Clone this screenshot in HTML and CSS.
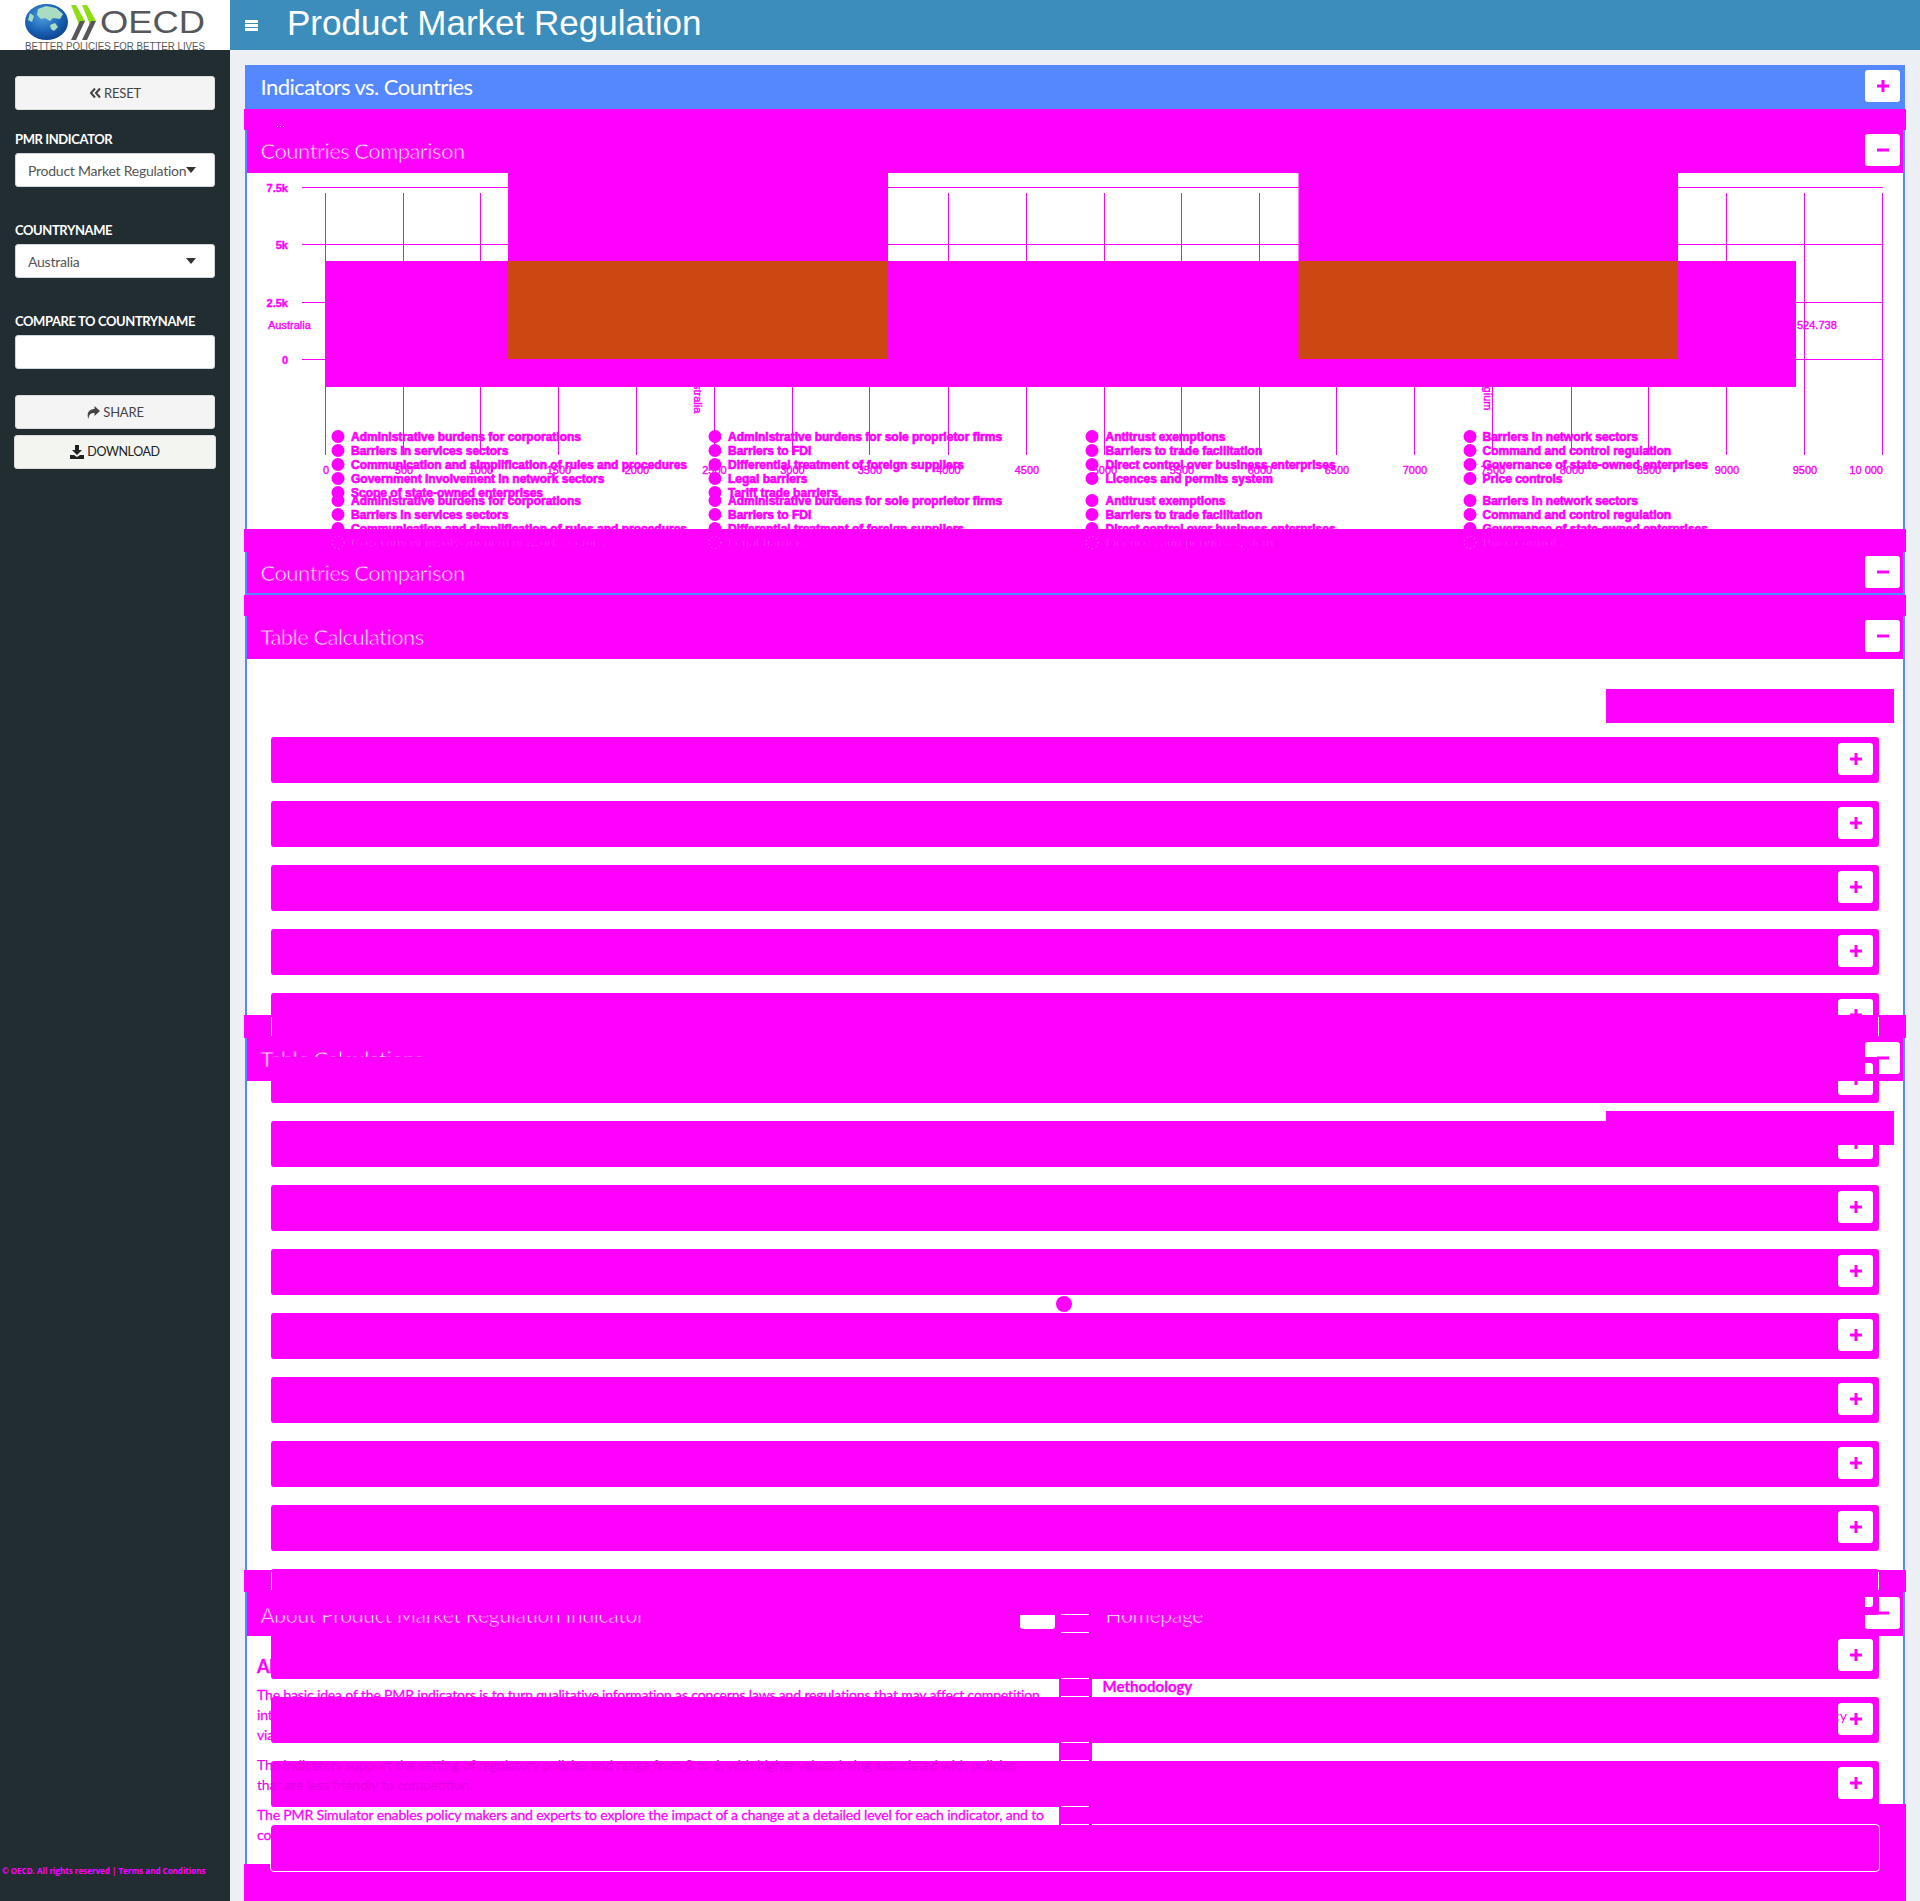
FILE: index.html
```html
<!DOCTYPE html>
<html lang="en">
<head>
<meta charset="utf-8">
<title>Product Market Regulation</title>
<link rel="stylesheet" href="styles.css">
</head>
<body>
<div class="app">
  <a class="logo" href="#" aria-label="OECD">
    <svg class="logo-art" width="230" height="50" viewBox="0 0 230 50">
      <defs>
        <radialGradient id="globe" cx="42%" cy="35%" r="70%">
          <stop offset="0" stop-color="#4f9fe0"/>
          <stop offset=".6" stop-color="#1a62b4"/>
          <stop offset="1" stop-color="#0c3f86"/>
        </radialGradient>
      </defs>
      <ellipse cx="46.500" cy="22" rx="21.500" ry="18" fill="url(#globe)"/>
      <path class="land" d="M38 9l8-3 10 2 7 6-3 5-7-1-3 3-5-3-4 1-4-4zM50 25l5-2 3 4-4 4-3-2zM30 13l4 3-2 6-4-2z"/>
      <polygon class="chev-g" points="71,5 76,5 85,21 80,27"/>
      <polygon class="chev-d" points="80,21 85,21 76,40 71,40"/>
      <polygon class="chev-g" points="82,5 87,5 96,21 91,27"/>
      <polygon class="chev-d" points="91,21 96,21 87,40 82,40"/>
      <text class="logo-word" x="100" y="33" textLength="105" lengthAdjust="spacingAndGlyphs">OECD</text>
      <text class="logo-sub" x="25" y="50" textLength="180" lengthAdjust="spacingAndGlyphs">BETTER POLICIES FOR BETTER LIVES</text>
    </svg>
  </a>
  <header class="topbar">
    <span class="burger"><i></i><i></i><i></i></span>
    <h1 class="app-title">Product Market Regulation</h1>
  </header>

  <aside class="sidebar">
    <button class="btn" type="button">
      <svg class="ic" width="12" height="12" viewBox="0 0 12 12"><path d="M6 1.500 2 6l4 4.500M11 1.500 7 6l4 4.500" fill="none" stroke="#444" stroke-width="2"/></svg>
      RESET
    </button>
    <div class="field field-first">
      <label class="field-label">PMR INDICATOR</label>
      <div class="select"><span>Product Market Regulation</span><b class="caret"></b></div>
    </div>
    <div class="field">
      <label class="field-label">COUNTRYNAME</label>
      <div class="select"><span>Australia</span><b class="caret"></b></div>
    </div>
    <div class="field">
      <label class="field-label">COMPARE TO COUNTRYNAME</label>
      <div class="select"></div>
    </div>
    <button class="btn btn-share" type="button">
      <svg class="ic" width="14" height="13" viewBox="0 0 14 13"><path d="M8.500 0 14 5 8.500 10V7C5 7 2.800 8 2.500 13 .5 8 2 3.200 8.500 3z" fill="#444"/></svg>
      SHARE
    </button>
    <button class="btn btn-download" type="button">
      <svg class="ic" width="14" height="14" viewBox="0 0 14 14"><path d="M5 0h4v5h3L7 10 2 5h3zM0 10h4l3 2 3-2h4v4H0z" fill="#222"/></svg>
      DOWNLOAD
    </button>
    <p class="copyright">© OECD. All rights reserved | Terms and Conditions</p>
  </aside>

  <main class="content">
    <div class="stack">
      <div class="head head-blue">
        <h2 class="title">Indicators vs. Countries</h2>
        <span class="tool"><svg width="12" height="12" viewBox="0 0 12 12"><path d="M4.500 0h3v4.500H12v3H7.500V12h-3V7.500H0v-3h4.500z"/></svg></span>
      </div>

      <div class="band band-s"><i class="speck"></i></div>
      <div class="head">
        <h2 class="title title-eroded">Countries Comparison</h2>
        <span class="tool"><svg width="12" height="12" viewBox="0 0 12 12"><path d="M0 4.500h12v3H0z"/></svg></span>
      </div>

      <div class="chart">
        <svg class="chart-art" width="1656" height="356" viewBox="247 173 1656 356">
          <g class="grid">
            <path d="M302 187.500H1883M302 244.500H1883M302 302.500H1883M302 359.500H1883"/>
            <path d="M325.500 193V455M403.500 193V455M480.500 193V455M558.500 193V455M636.500 193V455M714.500 193V455M792.500 193V455M869.500 193V455M948.500 193V455M1026.500 193V455M1104.500 193V455M1181.500 193V455M1259.500 193V455M1336.500 193V455M1414.500 193V455M1492.500 193V455M1571.500 193V455M1648.500 193V455M1726.500 193V455M1804.500 193V455M1882.500 193V455"/>
          </g>
          <g class="tick-y">
            <text x="288" y="192">7.5k</text>
            <text x="288" y="249">5k</text>
            <text x="288" y="307">2.5k</text>
            <text x="288" y="364">0</text>
          </g>
          <g class="tick-x">
            <text x="326" y="474">0</text><text x="404" y="474">500</text><text x="481" y="474">1000</text><text x="559" y="474">1500</text><text x="637" y="474">2000</text><text x="714.500" y="474">2500</text><text x="792.500" y="474">3000</text><text x="870" y="474">3500</text><text x="948.500" y="474">4000</text><text x="1027" y="474">4500</text><text x="1105" y="474">5000</text><text x="1182" y="474">5500</text><text x="1260" y="474">6000</text><text x="1337" y="474">6500</text><text x="1415" y="474">7000</text><text x="1493" y="474">7500</text><text x="1572" y="474">8000</text><text x="1649" y="474">8500</text><text x="1727" y="474">9000</text><text x="1805" y="474">9500</text><text class="tick-last" x="1883" y="474">10 000</text>
          </g>
          <text class="cat" x="268" y="329">Australia</text>
          <text class="cat" x="1797" y="329">524.738</text>
          <text class="cat" transform="translate(694 370.500) rotate(90)">Australia</text>
          <text class="cat" transform="translate(1484 370.700) rotate(90)">Belgium</text>
          <rect class="fill" x="325" y="261" width="1471" height="126"/>
          <rect class="fill" x="508" y="173" width="380" height="88"/>
          <rect class="fill" x="1298.500" y="173" width="379.500" height="88"/>
          <rect class="bar" x="508" y="261" width="380" height="98"/>
          <rect class="bar" x="1298.500" y="261" width="379.500" height="98"/>
          <g class="legend">
            <circle cx="338" cy="436.500" r="6.500"/><circle cx="338" cy="450.500" r="6.500"/><circle cx="338" cy="464.500" r="6.500"/><circle cx="338" cy="478.500" r="6.500"/><circle cx="338" cy="492.500" r="6.500"/>
            <circle cx="338" cy="500.500" r="6.500"/><circle cx="338" cy="514.500" r="6.500"/><circle cx="338" cy="528.500" r="6.500"/>
            <circle cx="715" cy="436.500" r="6.500"/><circle cx="715" cy="450.500" r="6.500"/><circle cx="715" cy="464.500" r="6.500"/><circle cx="715" cy="478.500" r="6.500"/><circle cx="715" cy="492.500" r="6.500"/>
            <circle cx="715" cy="500.500" r="6.500"/><circle cx="715" cy="514.500" r="6.500"/><circle cx="715" cy="528.500" r="6.500"/>
            <circle cx="1092" cy="436.500" r="6.500"/><circle cx="1092" cy="450.500" r="6.500"/><circle cx="1092" cy="464.500" r="6.500"/><circle cx="1092" cy="478.500" r="6.500"/>
            <circle cx="1092" cy="500.500" r="6.500"/><circle cx="1092" cy="514.500" r="6.500"/><circle cx="1092" cy="528.500" r="6.500"/>
            <circle cx="1470" cy="436.500" r="6.500"/><circle cx="1470" cy="450.500" r="6.500"/><circle cx="1470" cy="464.500" r="6.500"/><circle cx="1470" cy="478.500" r="6.500"/>
            <circle cx="1470" cy="500.500" r="6.500"/><circle cx="1470" cy="514.500" r="6.500"/><circle cx="1470" cy="528.500" r="6.500"/>
            <text x="351" y="441">Administrative burdens for corporations</text>
            <text x="351" y="455">Barriers in services sectors</text>
            <text x="351" y="469">Communication and simplification of rules and procedures</text>
            <text x="351" y="483">Government involvement in network sectors</text>
            <text x="351" y="497">Scope of state-owned enterprises</text>
            <text x="351" y="505">Administrative burdens for corporations</text>
            <text x="351" y="519">Barriers in services sectors</text>
            <text x="351" y="533">Communication and simplification of rules and procedures</text>
            <text x="728" y="441">Administrative burdens for sole proprietor firms</text>
            <text x="728" y="455">Barriers to FDI</text>
            <text x="728" y="469">Differential treatment of foreign suppliers</text>
            <text x="728" y="483">Legal barriers</text>
            <text x="728" y="497">Tariff trade barriers</text>
            <text x="728" y="505">Administrative burdens for sole proprietor firms</text>
            <text x="728" y="519">Barriers to FDI</text>
            <text x="728" y="533">Differential treatment of foreign suppliers</text>
            <text x="1105.500" y="441">Antitrust exemptions</text>
            <text x="1105.500" y="455">Barriers to trade facilitation</text>
            <text x="1105.500" y="469">Direct control over business enterprises</text>
            <text x="1105.500" y="483">Licences and permits system</text>
            <text x="1105.500" y="505">Antitrust exemptions</text>
            <text x="1105.500" y="519">Barriers to trade facilitation</text>
            <text x="1105.500" y="533">Direct control over business enterprises</text>
            <text x="1482.500" y="441">Barriers in network sectors</text>
            <text x="1482.500" y="455">Command and control regulation</text>
            <text x="1482.500" y="469">Governance of state-owned enterprises</text>
            <text x="1482.500" y="483">Price controls</text>
            <text x="1482.500" y="505">Barriers in network sectors</text>
            <text x="1482.500" y="519">Command and control regulation</text>
            <text x="1482.500" y="533">Governance of state-owned enterprises</text>
          </g>
        </svg>
      </div>

      <div class="band band-l">
        <svg class="ghost" width="1662" height="23" viewBox="244 529 1662 23">
          <circle cx="338" cy="542.500" r="6"/><circle cx="715" cy="542.500" r="6"/><circle cx="1092" cy="542.500" r="6"/><circle cx="1470" cy="542.500" r="6"/>
          <text x="351" y="547">Government involvement in network sectors</text>
          <text x="728" y="547">Legal barriers</text>
          <text x="1105.500" y="547">Licences and permits system</text>
          <text x="1482.500" y="547">Price controls</text>
        </svg>
      </div>
      <div class="head head-short">
        <h2 class="title title-eroded">Countries Comparison</h2>
        <span class="tool"><svg width="12" height="12" viewBox="0 0 12 12"><path d="M0 4.500h12v3H0z"/></svg></span>
      </div>
      <div class="rule"></div>

      <div class="band band-s"></div>
      <div class="head">
        <h2 class="title title-eroded">Table Calculations</h2>
        <span class="tool"><svg width="12" height="12" viewBox="0 0 12 12"><path d="M0 4.500h12v3H0z"/></svg></span>
      </div>

      <section class="table-body table-one">
        <div class="search-mask"></div>
        <div class="rows">
          <div class="row"><span class="tool tool-row"><svg width="12" height="12" viewBox="0 0 12 12"><path d="M4.500 0h3v4.500H12v3H7.500V12h-3V7.500H0v-3h4.500z"/></svg></span></div>
          <div class="row"><span class="tool tool-row"><svg width="12" height="12" viewBox="0 0 12 12"><path d="M4.500 0h3v4.500H12v3H7.500V12h-3V7.500H0v-3h4.500z"/></svg></span></div>
          <div class="row"><span class="tool tool-row"><svg width="12" height="12" viewBox="0 0 12 12"><path d="M4.500 0h3v4.500H12v3H7.500V12h-3V7.500H0v-3h4.500z"/></svg></span></div>
          <div class="row"><span class="tool tool-row"><svg width="12" height="12" viewBox="0 0 12 12"><path d="M4.500 0h3v4.500H12v3H7.500V12h-3V7.500H0v-3h4.500z"/></svg></span></div>
          <div class="row"><span class="tool tool-row"><svg width="12" height="12" viewBox="0 0 12 12"><path d="M4.500 0h3v4.500H12v3H7.500V12h-3V7.500H0v-3h4.500z"/></svg></span></div>
          <div class="row"><span class="tool tool-row tool-cut-a"><svg width="12" height="12" viewBox="0 0 12 12"><path d="M4.500 0h3v4.500H12v3H7.500V12h-3V7.500H0v-3h4.500z"/></svg></span></div>
          <div class="row"><span class="tool tool-row"><svg width="12" height="12" viewBox="0 0 12 12"><path d="M4.500 0h3v4.500H12v3H7.500V12h-3V7.500H0v-3h4.500z"/></svg></span></div>
          <div class="row"><span class="tool tool-row"><svg width="12" height="12" viewBox="0 0 12 12"><path d="M4.500 0h3v4.500H12v3H7.500V12h-3V7.500H0v-3h4.500z"/></svg></span></div>
          <div class="row"><span class="tool tool-row"><svg width="12" height="12" viewBox="0 0 12 12"><path d="M4.500 0h3v4.500H12v3H7.500V12h-3V7.500H0v-3h4.500z"/></svg></span></div>
          <div class="row"><span class="tool tool-row"><svg width="12" height="12" viewBox="0 0 12 12"><path d="M4.500 0h3v4.500H12v3H7.500V12h-3V7.500H0v-3h4.500z"/></svg></span></div>
          <div class="row"><span class="tool tool-row"><svg width="12" height="12" viewBox="0 0 12 12"><path d="M4.500 0h3v4.500H12v3H7.500V12h-3V7.500H0v-3h4.500z"/></svg></span></div>
          <div class="row"><span class="tool tool-row"><svg width="12" height="12" viewBox="0 0 12 12"><path d="M4.500 0h3v4.500H12v3H7.500V12h-3V7.500H0v-3h4.500z"/></svg></span></div>
          <div class="row"><span class="tool tool-row"><svg width="12" height="12" viewBox="0 0 12 12"><path d="M4.500 0h3v4.500H12v3H7.500V12h-3V7.500H0v-3h4.500z"/></svg></span></div>
          <div class="row"><span class="tool tool-row tool-cut-b"><svg width="12" height="12" viewBox="0 0 12 12"><path d="M4.500 0h3v4.500H12v3H7.500V12h-3V7.500H0v-3h4.500z"/></svg></span></div>
          <div class="row"><span class="tool tool-row"><svg width="12" height="12" viewBox="0 0 12 12"><path d="M4.500 0h3v4.500H12v3H7.500V12h-3V7.500H0v-3h4.500z"/></svg></span></div>
          <div class="row"><span class="tool tool-row"><svg width="12" height="12" viewBox="0 0 12 12"><path d="M4.500 0h3v4.500H12v3H7.500V12h-3V7.500H0v-3h4.500z"/></svg></span></div>
          <div class="row"><span class="tool tool-row"><svg width="12" height="12" viewBox="0 0 12 12"><path d="M4.500 0h3v4.500H12v3H7.500V12h-3V7.500H0v-3h4.500z"/></svg></span></div>
          <div class="row row-outlined"></div>
        </div>
      </section>

      <div class="band band-l band-marks"></div>
      <div class="head">
        <h2 class="title title-eroded">Table Calculations</h2>
        <span class="tool"><svg width="12" height="12" viewBox="0 0 12 12"><path d="M0 4.500h12v3H0z"/></svg></span>
      </div>

      <section class="table-body table-two">
        <div class="search-mask"></div>
        <i class="busy-dot"></i>
      </section>

      <div class="band band-m band-marks"></div>
      <div class="about">
        <div class="about-col about-left">
          <div class="head head-tall">
            <h2 class="title title-eroded title-thin">About Product Market Regulation Indicator</h2>
            <span class="tool"><svg width="12" height="12" viewBox="0 0 12 12"><path d="M0 4.500h12v3H0z"/></svg></span>
          </div>
          <div class="about-text">
            <h3 class="about-heading">About the PMR Indicators</h3>
            <p>The basic idea of the PMR indicators is to turn qualitative information as concerns laws and regulations that may affect competition<br>into quantitative indicators that allow regulatory settings to be compared across countries and tracked over time,<br>via a detailed questionnaire.</p>
            <p class="ghosted">The indicators support the setting of regulatory policies and range from 0 to 6, with higher values being associated with policies<br>that are less friendly to competition.</p>
            <p>The PMR Simulator enables policy makers and experts to explore the impact of a change at a detailed level for each indicator, and to<br>compare the effects with the average score of other countries.</p>
          </div>
        </div>
        <div class="gutter">
          <i class="gutter-gap"></i><i class="gutter-gap"></i><i class="gutter-gap"></i><i class="gutter-gap"></i>
        </div>
        <div class="about-col about-right">
          <div class="head head-tall">
            <h2 class="title title-eroded title-thin">Homepage</h2>
            <span class="tool"><svg width="12" height="12" viewBox="0 0 12 12"><path d="M0 4.500h12v3H0z"/></svg></span>
          </div>
          <div class="links">
            <a class="link" href="#">Methodology</a>
            <p class="link-note">Read the note on the methodology and on the scoring of regulatory policy</p>
          </div>
          <div class="about-fill"></div>
        </div>
      </div>
      <div class="band-foot"></div>
    </div>
  </main>
</div>
</body>
</html>
```
FILE: styles.css
```css
* { box-sizing: border-box; }
html, body { margin: 0; height: 1901px; overflow: hidden; }
body { font-family: Lato, "Open Sans", sans-serif; font-size: 14px; color: #333; background: #ecf0f5; }

.app { display: grid; grid-template-columns: 230px 1fr; grid-template-rows: 50px 1fr; height: 1901px; }

/* top */
.logo { display: block; background: #fff; height: 50px; overflow: hidden; }
.logo-art { display: block; }
.land { fill: #a9dcc0; }
.chev-g { fill: #8edc12; }
.chev-d { fill: #56585a; }
.logo-word { font-family: "Liberation Sans", Arial, sans-serif; font-size: 32px; fill: #55575a; }
.logo-sub { font-family: "Liberation Sans", Arial, sans-serif; font-size: 10px; fill: #55575a; }
.topbar { background: #3c8dbc; display: flex; align-items: center; color: #fff; }
.burger { display: flex; flex-direction: column; gap: 1px; margin-left: 15px; width: 13px; }
.burger i { display: block; height: 3px; background: #fff; }
.app-title { margin: -5px 0 0 29px; font: 400 35px/50px "Liberation Sans", Arial, sans-serif; }

/* sidebar */
.sidebar { background: #222d32; padding: 26px 15px 0; display: flex; flex-direction: column; }
.btn { height: 34px; border: 1px solid #ddd; border-radius: 3px; background: #f4f4f4; color: #444; font: 400 13px/1 Lato, sans-serif; letter-spacing: -.2px; display: flex; align-items: center; justify-content: center; gap: 3px; padding: 0; }
.ic { display: block; }
.field { margin-top: 33px; }
.field-first { margin-top: 19px; }
.field-label { display: block; height: 20px; margin-bottom: 4px; font: 700 13px/20px Lato, sans-serif; letter-spacing: -.4px; color: #fff; white-space: nowrap; }
.select { height: 34px; background: #fff; border: 1px solid #d2d6de; border-radius: 3px; padding: 0 18px 0 12px; display: flex; align-items: center; justify-content: space-between; color: #555; font-size: 14px; letter-spacing: -.25px; white-space: nowrap; }
.caret { flex: none; width: 0; height: 0; border-left: 5px solid transparent; border-right: 5px solid transparent; border-top: 6px solid #333; }
.btn-share { margin-top: 26px; }
.btn-download { margin: 6px -1px 0; background: #f3f5f1; color: #222; font-size: 12.500px; letter-spacing: -.4px; }
.copyright { margin: auto -13px 23px; font: 700 8px/14px "Open Sans", sans-serif; color: #f0f; white-space: nowrap; }

/* main */
.content { padding: 15px 15px 0; min-width: 0; }
.stack { border-left: 2px solid #58f; border-right: 2px solid #58f; }

.head { display: flex; justify-content: space-between; align-items: flex-start; height: 43px; padding: 4px 3px 0 13.500px; background: #f0f; }
.head-blue { height: 44px; margin: 0 -2px; padding: 5px 5px 0 15.500px; background: #58f; border-radius: 3px 3px 0 0; }
.head-short { height: 41px; }
.head-tall { height: 44px; padding-top: 5px; }
.title { margin: 0; font: 400 22px/33px Lato, sans-serif; letter-spacing: -.55px; color: #fff; }
.title-eroded { -webkit-text-stroke: .75px #f0f; }
.title-thin { line-height: 36px; font-size: 21px; letter-spacing: -.3px; }

.tool { display: flex; align-items: center; justify-content: center; flex: none; width: 35px; height: 32px; background: #fff; border-radius: 3px; }
.tool svg { display: block; fill: #f0f; }
.tool-row { margin: 6px 6px 0 auto; }
.tool-cut-a { clip-path: path("M27 0H35V11H27Z M0 18H35V32H0Z"); }
.tool-cut-b { clip-path: inset(22px 0 0 27px); }

.band { position: relative; z-index: 3; margin: 0 -3px; background: #f0f; }
.band-s { height: 21px; }
.band-l { height: 23px; }
.band-m { height: 22px; }
.speck { position: absolute; left: 33px; top: 17px; width: 8px; height: 1px; background: repeating-linear-gradient(90deg, #fff 0 1px, transparent 1px 3px); }
.band-marks::before, .band-marks::after { content: ""; position: absolute; top: 2px; bottom: 2px; width: 1px; background: #fff; }
.band-marks::before { left: 27px; }
.band-marks::after { right: 27px; }
.rule { height: 2px; background: #58f; }

/* chart */
.chart { height: 356px; background: #fff; }
.chart-art { display: block; font-family: "Liberation Sans", Arial, sans-serif; }
.grid path { fill: none; stroke: #f0f; stroke-width: 1; shape-rendering: crispEdges; }
.tick-y text { font-size: 11px; fill: #f0f; stroke: #f0f; stroke-width: .4px; text-anchor: end; font-weight: 700; }
.tick-x text { font-size: 11px; fill: #f0f; stroke: #f0f; stroke-width: .4px; text-anchor: middle; }
.tick-x .tick-last { text-anchor: end; }
.cat { font-size: 11px; fill: #f0f; stroke: #f0f; stroke-width: .4px; }
.fill { fill: #f0f; }
.bar { fill: #cc4712; }
.legend circle { fill: #f0f; }
.legend text { font-size: 12px; font-weight: 700; fill: #f0f; stroke: #f0f; stroke-width: .7px; }
.ghost { display: block; font-family: "Liberation Sans", Arial, sans-serif; }
.ghost text { font-size: 12px; font-weight: 700; fill: #fff; stroke: #f0f; stroke-width: 1.450px; }
.ghost circle { fill: #f0f; stroke: #fff; stroke-width: .5px; stroke-dasharray: 1 3; }

/* tables */
.table-body { position: relative; background: #fff; }
.table-one { height: 356px; }
.table-two { height: 489px; }
.search-mask { position: relative; z-index: 3; width: 288px; height: 34px; margin: 0 9px 0 auto; background: #f0f; top: 30px; }
.rows { position: relative; z-index: 2; margin: 44px 24px 0; height: 0; }
.row { display: flex; height: 46px; margin-bottom: 18px; background: #f0f; border-radius: 3px; }
.row-outlined { outline: 1px solid #fff; outline-offset: 0; }
.busy-dot { position: absolute; z-index: 3; left: 809px; top: 215px; width: 16px; height: 16px; border-radius: 50%; background: #f0f; }

/* about */
.about { display: flex; height: 272px; }
.about-col { display: flex; flex-direction: column; }
.about-left { width: 812px; background: #fff; }
.about-left .tool { margin-right: 1px; }
.about-text { position: relative; z-index: 3; padding: 18px 0 0 10px; color: #f0f; font-weight: 400; font-size: 14px; line-height: 20px; letter-spacing: -.15px; white-space: nowrap; -webkit-text-stroke: .3px #f0f; }
.about-heading { margin: 0 0 7px; font: 700 18px/24px Lato, sans-serif; }
.about-text p { margin: 0 0 10px; }
.about-text .ghosted { -webkit-text-stroke: .25px rgba(90, 0, 90, .5); }
.gutter { position: relative; z-index: 3; flex: none; width: 33px; padding: 22px 0 0 2px; background: #f0f; }
.gutter-gap { display: block; width: 28px; height: 19px; margin-bottom: 45px; border-top: 1px solid #fff; border-bottom: 1px solid #fff; }
.about-right { flex: 1; margin-right: -3px; }
.about-right .head { margin-right: 3px; }
.links { height: 168px; margin-right: 3px; padding: 40px 0 0 10.500px; background: #fff; }
.link { display: block; color: #f0f; font: 700 15px/20px Lato, sans-serif; text-decoration: none; -webkit-text-stroke: .3px #f0f; }
.link-note { position: relative; z-index: 3; margin: 10px 0 0; padding-right: 56px; text-align: right; color: #f0f; font-size: 14px; line-height: 20px; white-space: nowrap; }
.about-fill { flex: 1; background: #f0f; }
.band-foot { height: 37px; margin: 0 -3px; background: #f0f; }
```
